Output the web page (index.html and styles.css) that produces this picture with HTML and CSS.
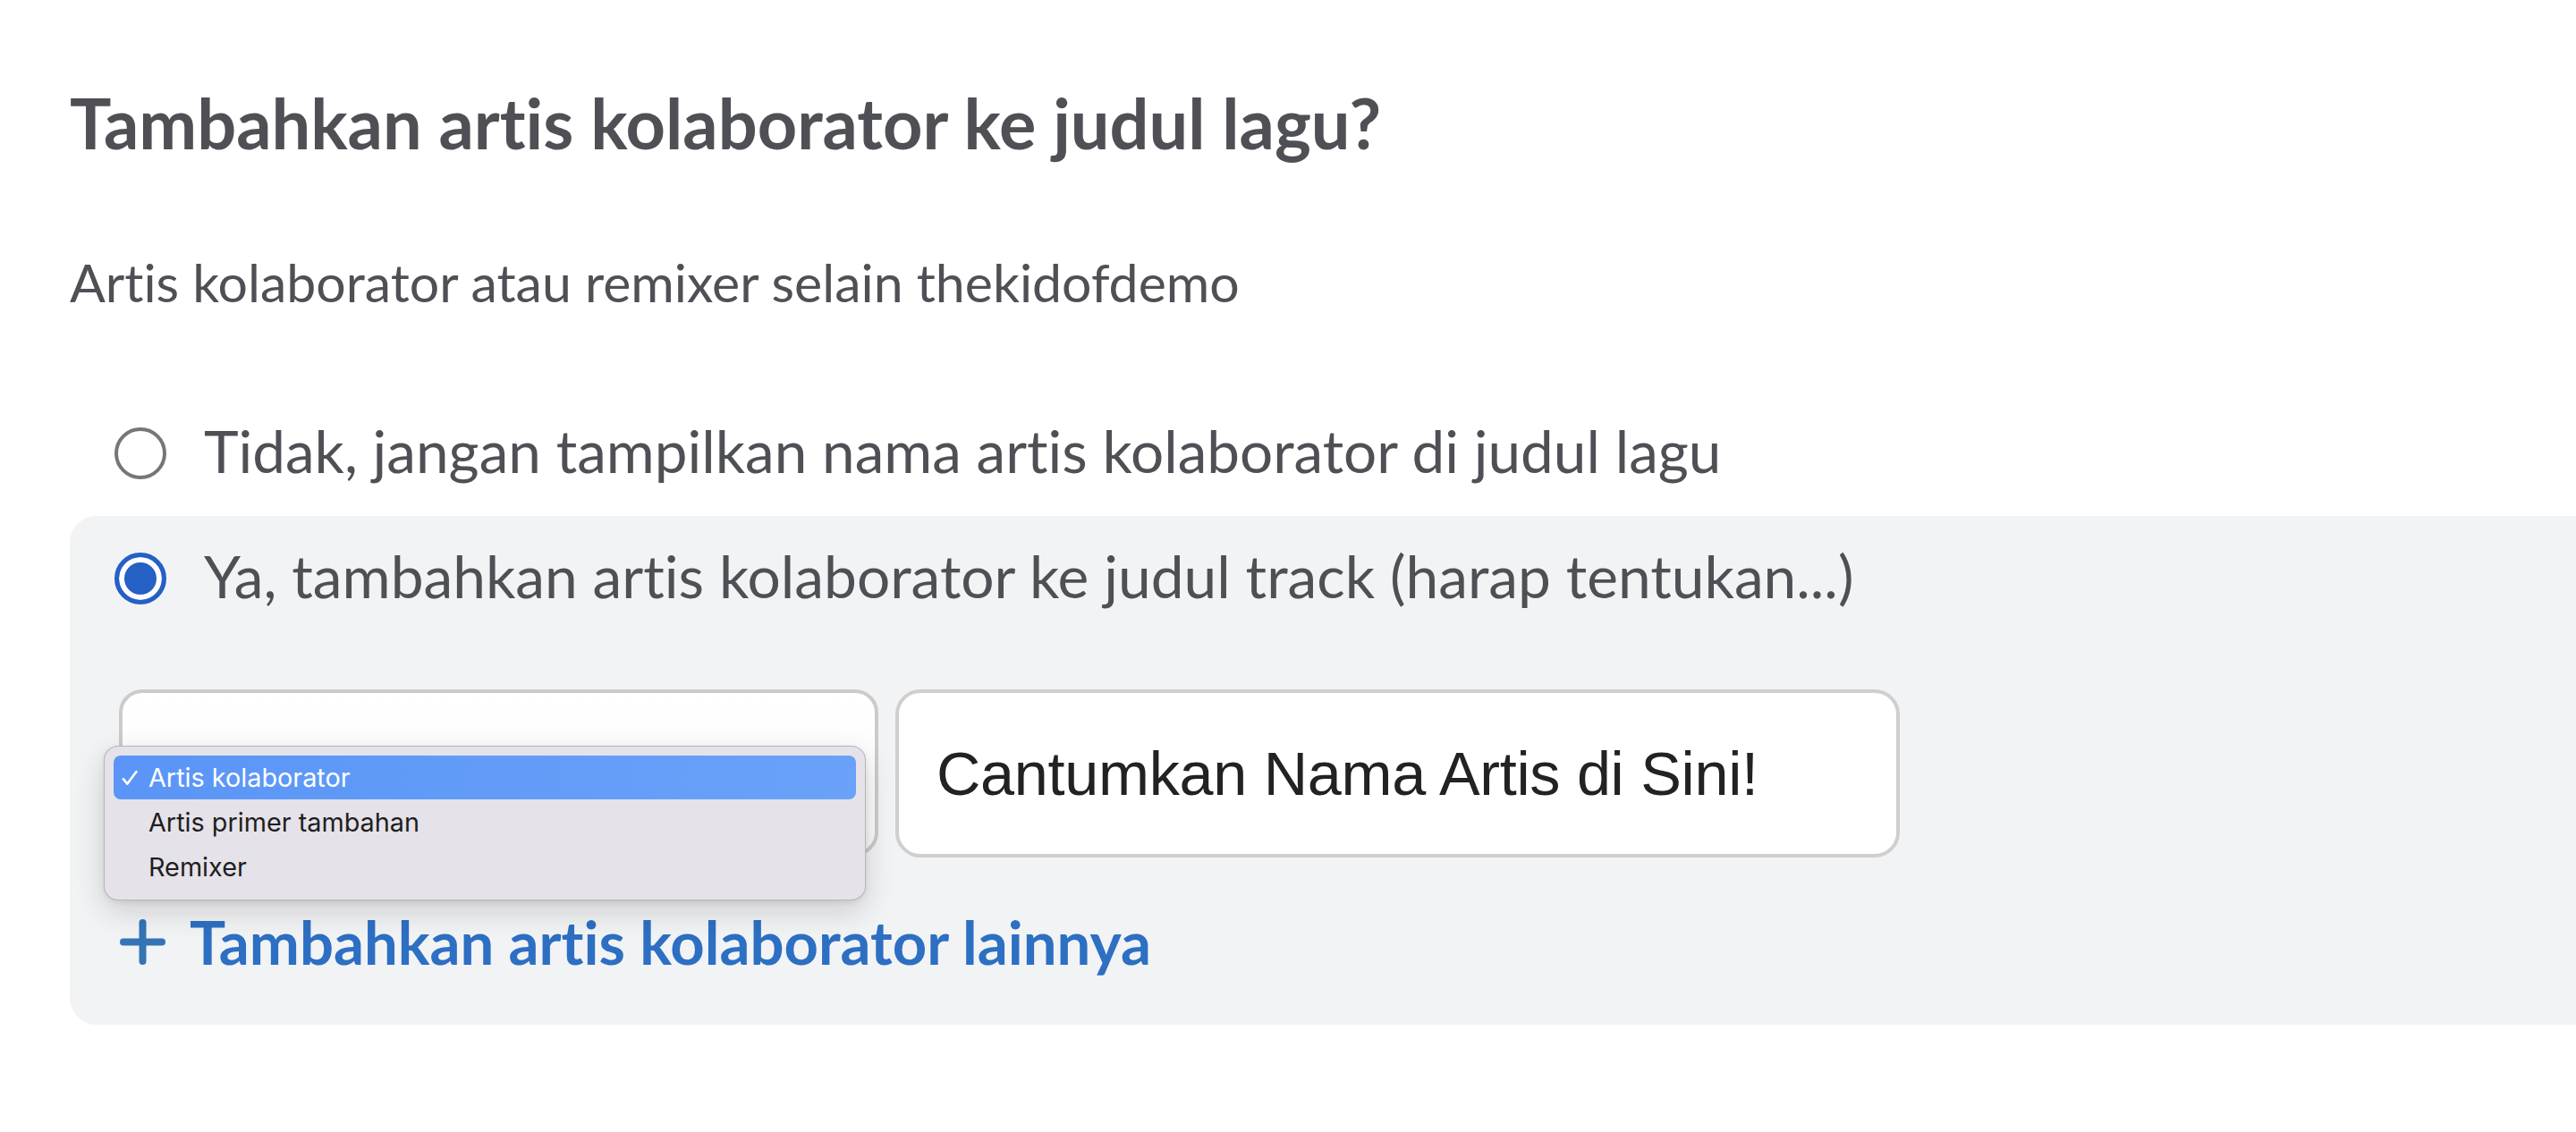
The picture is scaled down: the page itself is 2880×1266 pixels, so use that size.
FILE: index.html
```html
<!DOCTYPE html>
<html lang="id">
<head>
<meta charset="utf-8">
<title>Artis kolaborator</title>
<link rel="stylesheet" href="styles.css">
</head>
<body>
<main class="page">
  <h1 class="title">Tambahkan artis kolaborator ke judul lagu?</h1>
  <p class="subtitle">Artis kolaborator atau remixer selain thekidofdemo</p>

  <div class="options">
    <label class="option">
      <span class="radio"></span>
      <span class="option-label">Tidak, jangan tampilkan nama artis kolaborator di judul lagu</span>
    </label>

    <div class="option-panel">
      <label class="option option--in-panel">
        <span class="radio radio--checked"></span>
        <span class="option-label">Ya, tambahkan artis kolaborator ke judul track (harap tentukan...)</span>
      </label>

      <div class="collab-row">
        <div class="select-wrap">
          <div class="select-box"></div>
          <ul class="menu">
            <li class="menu-item menu-item--active">
              <svg class="menu-check" viewBox="0 0 18 18" width="18" height="18" aria-hidden="true">
                <path d="M1.8 10.2 L6.4 15.6 L16.4 2" stroke="currentColor" stroke-width="2.6" stroke-linecap="round" stroke-linejoin="round" fill="none"/>
              </svg>Artis kolaborator</li>
            <li class="menu-item">Artis primer tambahan</li>
            <li class="menu-item">Remixer</li>
          </ul>
        </div>
        <div class="text-input">Cantumkan Nama Artis di Sini!</div>
      </div>

      <a class="add-link" href="#">
        <svg class="add-icon" viewBox="0 0 51 51" width="51" height="51" aria-hidden="true">
          <path d="M25.5 4 V47 M4 25.5 H47" stroke="currentColor" stroke-width="8" stroke-linecap="round" fill="none"/>
        </svg>
        <span>Tambahkan artis kolaborator lainnya</span>
      </a>
    </div>
  </div>
</main>
</body>
</html>
```

FILE: styles.css
```css
html, body {
  margin: 0;
  padding: 0;
  background: #ffffff;
}

body {
  font-family: Lato, "Noto Sans", sans-serif;
  font-variant-ligatures: none;
  color: #4f5056;
}

.page {
  padding: 0 0 0 78px;
}

.title {
  margin: 91px 0 0;
  font-size: 77.5px;
  line-height: 94px;
  font-weight: 700;
  color: #4f5056;
}

.subtitle {
  margin: 95px 0 0;
  font-size: 59px;
  line-height: 72px;
  font-weight: 400;
}

.options {
  margin-top: 84px;
  display: flex;
  flex-direction: column;
}

.option {
  display: flex;
  align-items: center;
  gap: 42px;
  padding: 28px 0 33px 50px;
  font-size: 65.6px;
  line-height: 80px;
  cursor: pointer;
}

.option--in-panel {
  padding: 0 0 0 50px;
  font-size: 65.8px;
}

.radio {
  flex: none;
  box-sizing: border-box;
  width: 58px;
  height: 58px;
  margin-top: 5px;
  border-radius: 50%;
  border: 4px solid #767676;
  background: #ffffff;
}

.radio--checked {
  border: 5px solid #2560c4;
  box-shadow: inset 0 0 0 6px #ffffff;
  background: #2560c4;
}

.option-panel {
  background: #f2f3f5;
  border-radius: 30px 0 0 30px;
  padding: 27px 0 51px 0;
}

.collab-row {
  display: flex;
  gap: 19px;
  margin: 87px 0 0 55px;
}

.select-wrap {
  position: relative;
}

.select-box {
  box-sizing: border-box;
  width: 849px;
  height: 186px;
  border: 4px solid #cbcbcb;
  border-radius: 26px;
  background: linear-gradient(#ffffff, #fafafa);
}

.menu {
  position: absolute;
  left: -17px;
  top: 63px;
  box-sizing: border-box;
  width: 852px;
  margin: 0;
  padding: 10px 10px 11px;
  list-style: none;
  background: #e5e2e9;
  border: 1px solid rgba(0, 0, 0, 0.2);
  border-radius: 16px;
  box-shadow: 0 12px 34px rgba(0, 0, 0, 0.16), 0 2px 6px rgba(0, 0, 0, 0.08);
  font-family: Inter, Roboto, sans-serif;
  font-size: 28.8px;
  color: #1e1e1e;
}

.menu-item {
  position: relative;
  height: 50px;
  line-height: 50px;
  padding-left: 39px;
  border-radius: 8px;
}

.menu-item--active {
  height: 49px;
  line-height: 49px;
  margin-bottom: 1px;
  background: linear-gradient(90deg, #5a95f7, #6aa2f9);
  color: #ffffff;
}

.menu-check {
  position: absolute;
  left: 9px;
  top: 16px;
  color: #ffffff;
}

.text-input {
  box-sizing: border-box;
  width: 1123px;
  height: 188px;
  border: 4px solid #cfcfcf;
  border-radius: 28px;
  background: #ffffff;
  display: flex;
  align-items: center;
  padding-left: 42px;
  font-family: "Liberation Sans", Arial, sans-serif;
  font-size: 68.4px;
  letter-spacing: -0.3px;
  line-height: 82px;
  color: #222222;
}

.add-link {
  display: flex;
  align-items: center;
  gap: 27px;
  margin: 52px 0 0 56px;
  font-size: 67px;
  line-height: 84px;
  font-weight: 700;
  color: #2d6fc2;
  text-decoration: none;
  width: max-content;
}

.add-icon {
  flex: none;
  color: #3474b6;
}
```
